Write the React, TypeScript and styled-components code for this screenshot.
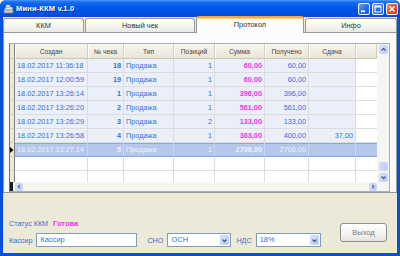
import React from "react";
import styled, { createGlobalStyle, css } from "styled-components";

const GlobalStyle = createGlobalStyle`
  html, body { margin: 0; padding: 0; background: #ffffff; }
  body { font-family: "Liberation Sans", Arial, sans-serif; width: 400px; height: 256px; overflow: hidden; }
  * { box-sizing: border-box; }
`;

const Window = styled.div`
  width: 400px;
  height: 256px;
  display: flex;
  flex-direction: column;
  background: #0a4fdc;
  border-radius: 6px 6px 0 0;
  overflow: hidden;
`;

const TitleBar = styled.div`
  height: 17px;
  flex: none;
  display: flex;
  align-items: center;
  padding: 0 2px 0 3px;
  background: linear-gradient(#4a9bff 0%, #1a6cf0 12%, #0058ea 45%, #0052e0 80%, #0a48c8 100%);
`;

const TitleText = styled.span`
  color: #ffffff;
  font-weight: bold;
  font-size: 7.6px;
  letter-spacing: 0.1px;
  margin-left: 2px;
  text-shadow: 1px 1px 0 #0b2d8a;
  flex: 1;
`;

const CaptionButtons = styled.div`
  display: flex;
  gap: 2px;
`;

const CaptionButton = styled.div<{ $close?: boolean }>`
  width: 12px;
  height: 12px;
  border: 1px solid #ffffff;
  border-radius: 2px;
  display: flex;
  align-items: center;
  justify-content: center;
  background: ${(p) =>
    p.$close
      ? "linear-gradient(135deg, #f0906c 0%, #e1512b 50%, #c23c1a 100%)"
      : "linear-gradient(135deg, #6fa4ff 0%, #2a6ff0 50%, #1c5ad8 100%)"};
`;

const Body = styled.div`
  flex: 1;
  margin: 0 3px 3px;
  background: #ece9d8;
  display: flex;
  flex-direction: column;
`;

const TabStrip = styled.div`
  height: 15px;
  flex: none;
  display: flex;
  align-items: flex-end;
  gap: 1px;
  position: relative;
  z-index: 1;
`;

const Tab = styled.div<{ $w: number; $active?: boolean }>`
  width: ${(p) => p.$w}px;
  height: 14px;
  display: flex;
  align-items: center;
  justify-content: center;
  font-size: 7.4px;
  color: #333333;
  border: 1px solid #919b9c;
  border-bottom: none;
  border-radius: 3px 3px 0 0;
  background: linear-gradient(#ffffff 0%, #f7f6f2 50%, #e9e8e1 100%);
  ${(p) =>
    p.$active &&
    css`
      height: 17px;
      margin-bottom: -1px;
      background: #fcfcfe;
      border-top: 2px solid #f3a73c;
      box-shadow: inset 0 1px 0 #ffd67a;
      padding-bottom: 2px;
    `}
`;

const Panel = styled.div`
  height: 161px;
  flex: none;
  border: 1px solid #919b9c;
  background: #fcfcfe;
  padding: 10px 6px 0 5px;
  display: flex;
`;

const GridFrame = styled.div`
  flex: 1;
  height: 149px;
  display: grid;
  grid-template-columns: 1fr 12px;
  grid-template-rows: 1fr 9px;
  border: 1px solid #a7aeb6;
  border-left-color: #6f6f6f;
  background: #ffffff;
  overflow: hidden;
`;

const Table = styled.div`
  overflow: hidden;
  display: flex;
  flex-direction: column;
`;

const COLS = "5px 73px 36px 50px 41px 50px 44px 47px 1fr";

const HeaderRow = styled.div`
  display: grid;
  grid-template-columns: ${COLS};
  height: 15px;
  flex: none;
  background: linear-gradient(#f6f5ef, #e9e6d8);
  border-bottom: 1px solid #cbc7b6;
`;

const HeaderCell = styled.div`
  font-size: 6.7px;
  color: #454545;
  display: flex;
  align-items: center;
  justify-content: center;
  border-right: 1px solid #d2cebe;
  box-shadow: inset 1px 0 0 #ffffff;
  white-space: nowrap;
  overflow: hidden;
`;

const RowHeadCell = styled.div<{ $head?: boolean }>`
  background: #ece9d8;
  border-right: 1px solid #7b7b7b;
  border-bottom: ${(p) => (p.$head ? "none" : "1px solid #d6d3c6")};
  display: flex;
  align-items: center;
  justify-content: flex-start;
`;

const DataRow = styled.div<{ $selected?: boolean }>`
  display: grid;
  grid-template-columns: ${COLS};
  height: 14px;
  flex: none;
  ${(p) =>
    p.$selected &&
    css`
      background: #b5c8ec;
      box-shadow: inset 0 1px 0 #8aa6df, inset 0 -1px 0 #8aa6df;
    `}
`;

type Kind = "text" | "num" | "bold" | "sum";

const Cell = styled.div<{ $kind?: Kind; $filled?: boolean; $selected?: boolean; $filler?: boolean }>`
  font-size: 7.3px;
  line-height: 13px;
  padding: 0 2px;
  white-space: nowrap;
  overflow: hidden;
  border-bottom: 1px solid #dcdcdc;
  border-right: ${(p) => (p.$filler ? "none" : "1px solid #dcdcdc")};
  background: ${(p) => (p.$selected ? "transparent" : p.$filled ? "#ebeff9" : "#ffffff")};
  color: ${(p) => (p.$kind === "sum" ? "#e43ae4" : "#3a70d6")};
  font-weight: ${(p) => (p.$kind === "bold" || p.$kind === "sum" ? "bold" : "normal")};
  text-align: ${(p) => (p.$kind === "text" ? "left" : "right")};
  ${(p) =>
    p.$selected &&
    css`
      color: #eef2fb;
      border-bottom-color: #8aa6df;
      border-right-color: #c9d5ee;
    `}
`;

const VScroll = styled.div`
  background: #f5f5f1;
  display: flex;
  flex-direction: column;
  align-items: center;
  padding: 1px 0 0;
`;

const Track = styled.div`
  flex: 1;
  display: flex;
  flex-direction: column;
  justify-content: flex-end;
  align-items: center;
  padding-bottom: 2px;
`;

const ScrollBtn = styled.div<{ $w?: number; $h?: number }>`
  width: ${(p) => p.$w ?? 9}px;
  height: ${(p) => p.$h ?? 9}px;
  border-radius: 2px;
  border: 1px solid #c9d7f5;
  background: linear-gradient(135deg, #dfe8fc 0%, #c3d4f9 60%, #b4c8f4 100%);
  display: flex;
  align-items: center;
  justify-content: center;
`;

const Thumb = styled.div`
  width: 9px;
  height: 9px;
  border-radius: 2px;
  border: 1px solid #c9d7f5;
  background: linear-gradient(90deg, #cddbfa, #bccff7);
`;

const HScroll = styled.div`
  background: #f5f5f1;
  display: flex;
  align-items: center;
`;

const HScrollHead = styled.div`
  width: 5px;
  height: 9px;
  display: flex;
  align-items: stretch;
`;

const DarkBar = styled.div`
  width: 3px;
  background: #1c1c1c;
`;

const HTrack = styled.div`
  flex: 1;
`;

const Corner = styled.div`
  background: #f5f5f1;
`;

const Footer = styled.div`
  flex: 1;
  display: flex;
  align-items: flex-end;
  padding: 0 10px 6px 6px;
`;

const LeftCol = styled.div`
  display: flex;
  flex-direction: column;
  gap: 4px;
`;

const StatusRow = styled.div`
  display: flex;
  gap: 5px;
  line-height: 10px;
`;

const Label = styled.span<{ $gap?: number }>`
  color: #3d6fd0;
  font-size: 7.2px;
  margin-left: ${(p) => p.$gap ?? 0}px;
`;

const StatusValue = styled.span`
  color: #e43ae4;
  font-weight: bold;
  font-size: 7.5px;
`;

const ControlsRow = styled.div`
  display: flex;
  align-items: center;
  gap: 4px;
  height: 14px;
`;

const TextBox = styled.div<{ $w: number }>`
  width: ${(p) => p.$w}px;
  height: 14px;
  border: 1px solid #7f9db9;
  background: #ffffff;
  color: #3a70d6;
  font-size: 7.5px;
  line-height: 12px;
  padding-left: 3px;
  display: flex;
  align-items: center;
  justify-content: space-between;
  padding-right: 1px;
`;

const DropBtn = styled.div`
  width: 9px;
  height: 10px;
  border-radius: 1px;
  background: linear-gradient(135deg, #dde7fd 0%, #c2d3fa 60%, #b3c7f5 100%);
  border: 1px solid #c9d7f5;
  display: flex;
  align-items: center;
  justify-content: center;
`;

const ExitButton = styled.div`
  margin-left: auto;
  margin-bottom: 5px;
  width: 47px;
  height: 19px;
  border: 1px solid #8e8f8f;
  border-radius: 3px;
  background: linear-gradient(#ffffff 0%, #f4f3ee 60%, #e3e2da 100%);
  color: #7a7a7a;
  font-size: 7.5px;
  display: flex;
  align-items: center;
  justify-content: center;
`;

const Chevron: React.FC<{ dir: "up" | "down" | "left" | "right" }> = ({ dir }) => {
  const paths: Record<string, string> = {
    up: "M1.5 4.5 L3.5 2.5 L5.5 4.5",
    down: "M1.5 2.5 L3.5 4.5 L5.5 2.5",
    left: "M4.5 1.5 L2.5 3.5 L4.5 5.5",
    right: "M2.5 1.5 L4.5 3.5 L2.5 5.5",
  };
  return (
    <svg width="7" height="7" viewBox="0 0 7 7">
      <path d={paths[dir]} fill="none" stroke="#4d6185" strokeWidth="1.3" />
    </svg>
  );
};

const RegisterIcon = () => (
  <svg width="11" height="10" viewBox="0 0 11 10">
    <path d="M1 6 L3 3 L9 3 L10 6 Z" fill="#e8e8e8" stroke="#8a8a8a" strokeWidth="0.6" />
    <rect x="1" y="6" width="9" height="3" fill="#cfcfcf" stroke="#7a7a7a" strokeWidth="0.6" />
    <rect x="3" y="1" width="4" height="2" fill="#f4f4f4" stroke="#8a8a8a" strokeWidth="0.5" />
  </svg>
);

type Row = {
  date: string;
  num: string;
  type: string;
  pos: string;
  sum: string;
  got: string;
  change: string;
  selected?: boolean;
};

const rows: Row[] = [
  { date: "18.02.2017 11:36:18", num: "18", type: "Продажа", pos: "1", sum: "60,00", got: "60,00", change: "" },
  { date: "18.02.2017 12:00:59", num: "19", type: "Продажа", pos: "1", sum: "60,00", got: "60,00", change: "" },
  { date: "18.02.2017 13:26:14", num: "1", type: "Продажа", pos: "1", sum: "396,00", got: "396,00", change: "" },
  { date: "18.02.2017 13:26:20", num: "2", type: "Продажа", pos: "1", sum: "561,00", got: "561,00", change: "" },
  { date: "18.02.2017 13:26:29", num: "3", type: "Продажа", pos: "2", sum: "133,00", got: "133,00", change: "" },
  { date: "18.02.2017 13:26:58", num: "4", type: "Продажа", pos: "1", sum: "363,00", got: "400,00", change: "37,00" },
  { date: "18.02.2017 13:27:14", num: "5", type: "Продажа", pos: "1", sum: "2706,00", got: "2706,00", change: "", selected: true },
];

const headers = ["Создан", "№ чека", "Тип", "Позиций", "Сумма", "Получено", "Сдача"];

export default function App() {
  return (
    <>
      <GlobalStyle />
      <Window>
        <TitleBar>
          <RegisterIcon />
          <TitleText>Мини-ККМ v.1.0</TitleText>
          <CaptionButtons>
            <CaptionButton>
              <svg width="8" height="8" viewBox="0 0 8 8">
                <rect x="1" y="5.5" width="4" height="1.6" fill="#fff" />
              </svg>
            </CaptionButton>
            <CaptionButton>
              <svg width="8" height="8" viewBox="0 0 8 8">
                <rect x="1" y="1" width="6" height="6" fill="none" stroke="#fff" strokeWidth="1" />
                <rect x="1" y="1" width="6" height="1.5" fill="#fff" />
              </svg>
            </CaptionButton>
            <CaptionButton $close>
              <svg width="8" height="8" viewBox="0 0 8 8">
                <path d="M1.5 1.5 L6.5 6.5 M6.5 1.5 L1.5 6.5" stroke="#fff" strokeWidth="1.4" />
              </svg>
            </CaptionButton>
          </CaptionButtons>
        </TitleBar>
        <Body>
          <TabStrip>
            <Tab $w={81}>ККМ</Tab>
            <Tab $w={110}>Новый чек</Tab>
            <Tab $w={108} $active>
              Протокол
            </Tab>
            <Tab $w={92}>Инфо</Tab>
          </TabStrip>
          <Panel>
            <GridFrame>
              <Table>
                <HeaderRow>
                  <RowHeadCell $head />
                  {headers.map((h) => (
                    <HeaderCell key={h}>{h}</HeaderCell>
                  ))}
                  <HeaderCell />
                </HeaderRow>
                {rows.map((r, i) => (
                  <DataRow key={i} $selected={r.selected}>
                    <RowHeadCell>
                      {r.selected && (
                        <svg width="4" height="6" viewBox="0 0 4 6">
                          <path d="M0 0 L3.5 3 L0 6 Z" fill="#000" />
                        </svg>
                      )}
                    </RowHeadCell>
                    <Cell $kind="text" $filled $selected={r.selected}>{r.date}</Cell>
                    <Cell $kind="bold" $filled $selected={r.selected}>{r.num}</Cell>
                    <Cell $kind="text" $filled $selected={r.selected}>{r.type}</Cell>
                    <Cell $kind="num" $filled $selected={r.selected}>{r.pos}</Cell>
                    <Cell $kind={r.selected ? "bold" : "sum"} $filled $selected={r.selected}>{r.sum}</Cell>
                    <Cell $kind="num" $filled $selected={r.selected}>{r.got}</Cell>
                    <Cell $kind="num" $filled $selected={r.selected}>{r.change}</Cell>
                    <Cell $filler $selected={r.selected} />
                  </DataRow>
                ))}
                {[0, 1].map((i) => (
                  <DataRow key={`e${i}`}>
                    <RowHeadCell />
                    <Cell />
                    <Cell />
                    <Cell />
                    <Cell />
                    <Cell />
                    <Cell />
                    <Cell />
                    <Cell $filler />
                  </DataRow>
                ))}
              </Table>
              <VScroll>
                <ScrollBtn>
                  <Chevron dir="up" />
                </ScrollBtn>
                <Track>
                  <Thumb />
                </Track>
                <ScrollBtn>
                  <Chevron dir="down" />
                </ScrollBtn>
              </VScroll>
              <HScroll>
                <HScrollHead>
                  <DarkBar />
                </HScrollHead>
                <ScrollBtn $w={8} $h={8}>
                  <Chevron dir="left" />
                </ScrollBtn>
                <HTrack />
                <ScrollBtn $w={8} $h={8}>
                  <Chevron dir="right" />
                </ScrollBtn>
              </HScroll>
              <Corner />
            </GridFrame>
          </Panel>
          <Footer>
            <LeftCol>
              <StatusRow>
                <Label>Статус ККМ</Label>
                <StatusValue>Готова</StatusValue>
              </StatusRow>
              <ControlsRow>
                <Label>Кассир</Label>
                <TextBox $w={101}>Кассир</TextBox>
                <Label $gap={6}>СНО</Label>
                <TextBox $w={64}>
                  ОСН
                  <DropBtn>
                    <Chevron dir="down" />
                  </DropBtn>
                </TextBox>
                <Label $gap={1}>НДС</Label>
                <TextBox $w={65}>
                  18%
                  <DropBtn>
                    <Chevron dir="down" />
                  </DropBtn>
                </TextBox>
              </ControlsRow>
            </LeftCol>
            <ExitButton>Выход</ExitButton>
          </Footer>
        </Body>
      </Window>
    </>
  );
}
